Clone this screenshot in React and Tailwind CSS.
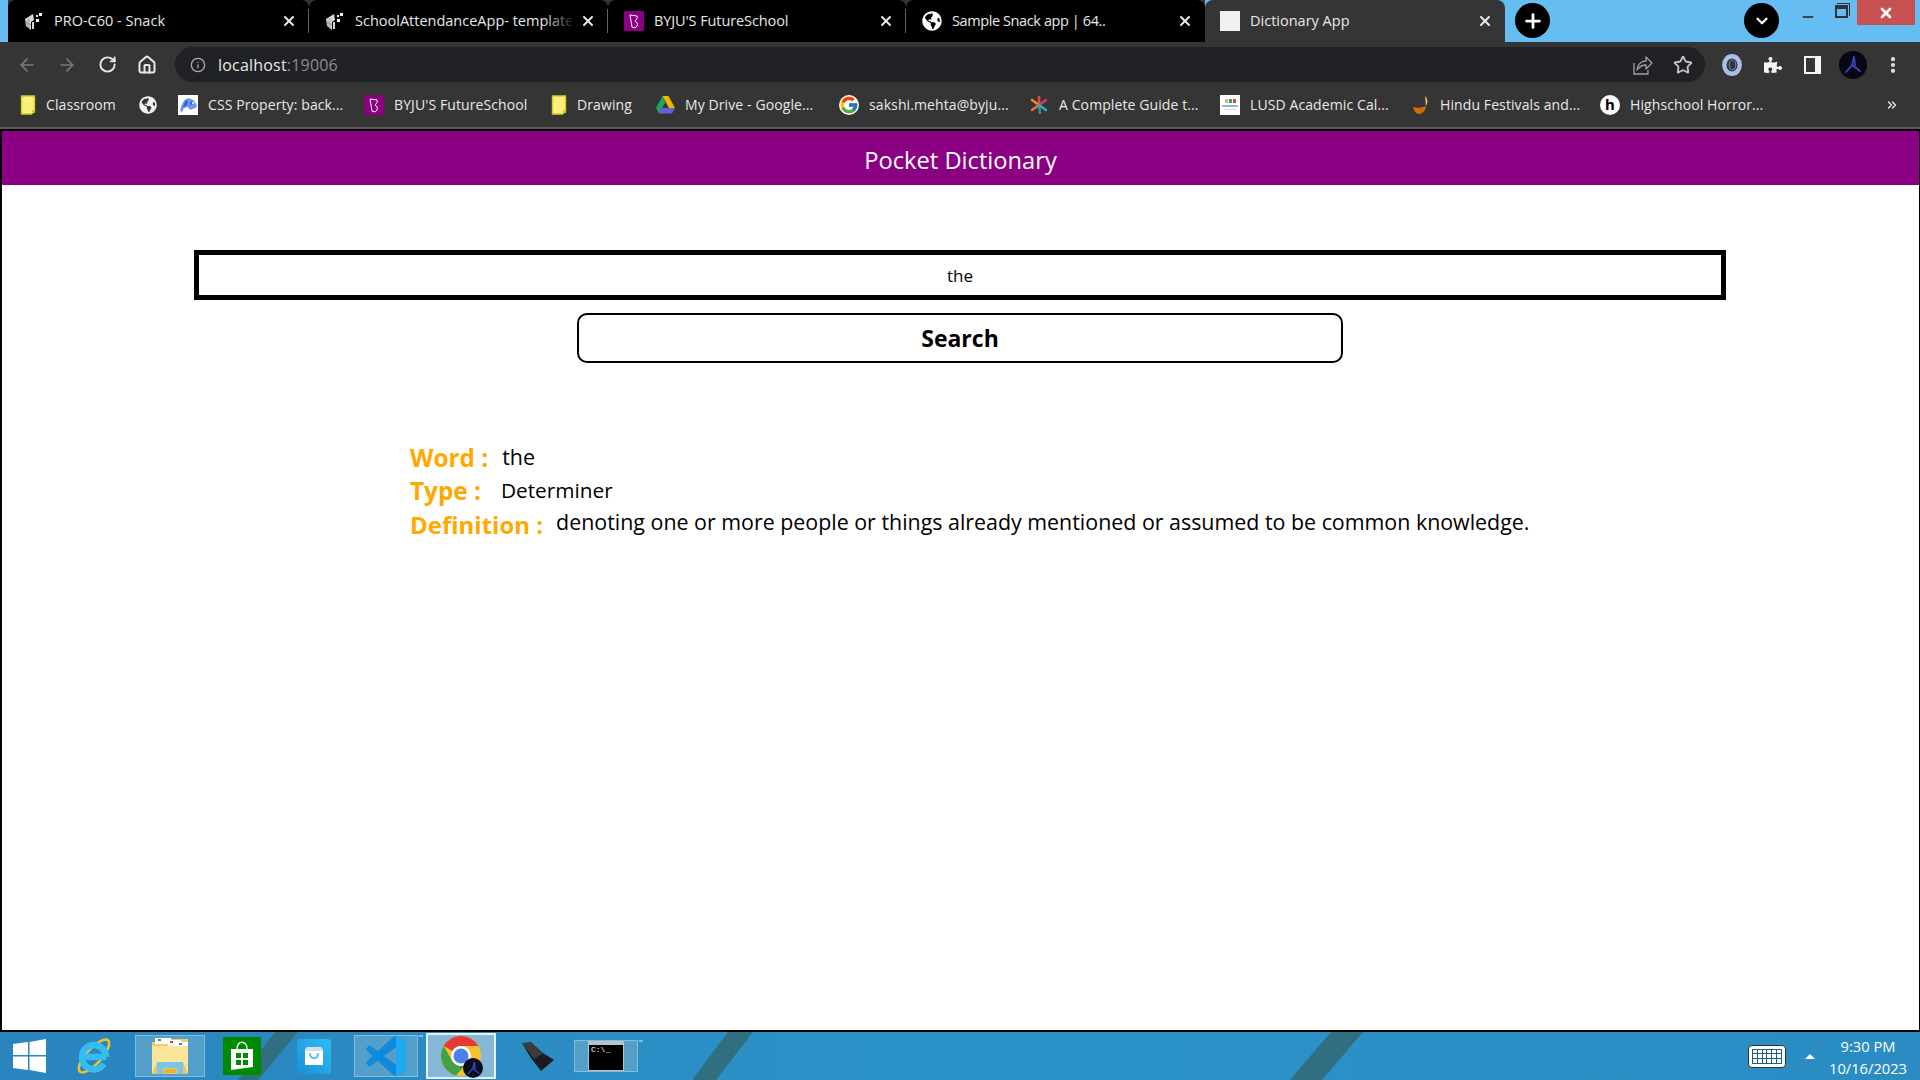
import { ArrowLeft, ArrowRight, RotateCw, Home, Info, Star, MoreVertical, Plus, ChevronDown, X, Minus, ChevronsRight } from 'lucide-react'
import { FaGlobeAmericas, FaPuzzlePiece } from 'react-icons/fa'
import { FcGoogle } from 'react-icons/fc'

const uiFont = "font-['Open_Sans','Noto_Sans',sans-serif]"

function SnackIcon() {
  return (
    <svg width="20" height="20" viewBox="0 0 20 20" className="shrink-0">
      <path d="M1 8l8-5 1 6-3 2v8l-5-4z" fill="#d8d8d8" />
      <path d="M3 9v7M5 7v10M1 11l6 3" stroke="#777" strokeWidth="0.6" />
      <rect x="8" y="11" width="2" height="7" fill="#d8d8d8" />
      <rect x="12" y="4" width="2" height="2" fill="#e8e8e8" />
      <rect x="15" y="2" width="3" height="3" fill="#f4f4f4" />
      <rect x="12" y="8" width="3" height="3" fill="#f4f4f4" />
    </svg>
  )
}

function ByjuIcon({ size = 20 }) {
  return (
    <svg width={size} height={size} viewBox="0 0 20 20" className="shrink-0">
      <rect width="20" height="20" fill="#8b0083" rx="1" />
      <path d="M6 4l7 1c1 2-1 4-2 5 2 1 3 3 2 5l-2 2-3-1z" fill="none" stroke="#fff" strokeWidth="1" />
    </svg>
  )
}

function FolderIcon() {
  return (
    <svg width="16" height="20" viewBox="0 0 16 20" className="shrink-0">
      <path d="M1.5 1h13v15l-3 3h-10z" fill="#f9f17c" stroke="#d8c92a" strokeWidth="1.4" strokeLinejoin="round" />
      <path d="M12 15h3v3h-3z" fill="#d8c92a" />
    </svg>
  )
}

function CssIcon() {
  return (
    <div className="flex h-5 w-5 shrink-0 items-center justify-center bg-white">
      <svg width="19" height="19" viewBox="0 0 19 19">
        <path d="M1 16c1-5 3-10 6-12 2-1 4-1 5 0 3 1 5 4 6 7-1 2-3 3-5 3l-2 1-2-3-4 1-2 4z" fill="#6b97ec" />
        <path d="M4 12l3-7 2 2-2 4zM12 6l2 1-1 3-2-1z" fill="#2f5fd0" />
        <circle cx="14" cy="8" r="1" fill="#fff" />
      </svg>
    </div>
  )
}

function DriveIcon() {
  return (
    <svg width="19" height="18" viewBox="0 0 19 18" className="shrink-0">
      <path d="M6.5 0h6L19 12h-6z" fill="#f4b400" />
      <path d="M6.5 0L0 12l3 5.5L9.5 6z" fill="#1fa463" />
      <path d="M6 12h13l-3 5.5H3z" fill="#6a5fd8" />
    </svg>
  )
}

function SparkIcon() {
  return (
    <svg width="20" height="20" viewBox="0 0 20 20" className="shrink-0" strokeWidth="2.6" strokeLinecap="round">
      <path d="M10 10L10 2" stroke="#d9503f" />
      <path d="M10 10L3 5" stroke="#f08a24" />
      <path d="M10 10L3 15" stroke="#ef6b4a" />
      <path d="M10 10L11 18" stroke="#2c8f9e" />
      <path d="M10 10L17 5" stroke="#d13b6d" />
      <path d="M10 10L17 15" stroke="#3aa5b5" />
    </svg>
  )
}

function LusdIcon() {
  return (
    <div className="flex h-5 w-5 shrink-0 flex-col items-center justify-center gap-[2px] bg-white">
      <div className="flex gap-[1px]">
        <div className="h-1 w-[3px] bg-[#c9b98a]" />
        <div className="h-1 w-[3px] bg-[#4a9b5e]" />
        <div className="h-1 w-[3px] bg-[#c0504d]" />
      </div>
      <div className="h-[2px] w-4 bg-[#8fb6dc]" />
      <div className="h-px w-3 bg-[#c7d9ea]" />
    </div>
  )
}

function DiyaIcon() {
  return (
    <svg width="18" height="20" viewBox="0 0 18 20" className="shrink-0">
      <path d="M1 12c4 1 9 1 13-1 0 4-3 8-7 8-3 0-5-3-6-7z" fill="#d06a00" />
      <path d="M13 1c3 3 3 7 1 10z" fill="#e9c75a" />
    </svg>
  )
}

function HIcon() {
  return (
    <div className="flex h-5 w-5 shrink-0 items-center justify-center rounded-full bg-white text-[15px] font-bold leading-none text-black">h</div>
  )
}

function ExtIcon() {
  return (
    <svg width="20" height="22" viewBox="0 0 20 22" fill="none">
      <ellipse cx="10" cy="11" rx="7.7" ry="8.8" stroke="#a9bfe9" strokeWidth="4.4" />
      <ellipse cx="10.5" cy="11" rx="3.2" ry="5" stroke="#5f7fc0" strokeWidth="1.2" />
    </svg>
  )
}

function JordanMark({ size = 20 }) {
  return (
    <svg width={size} height={size} viewBox="0 0 20 20" fill="none" stroke="#3c44cc" strokeWidth="1.8" strokeLinecap="round">
      <path d="M11 2l-2 8-6 7M9 10l8 6M11 2l1 8" />
    </svg>
  )
}

function ShareIcon() {
  return (
    <svg width="20" height="20" viewBox="0 0 20 20" fill="none" stroke="#a0a0a0" strokeWidth="1.3">
      <path d="M1 8v11h14v-4" />
      <path d="M4 15c0-5 4-9 9-9V2l6 6-6 6v-4c-4 0-7 2-9 5z" strokeLinejoin="round" />
    </svg>
  )
}

const tabs = [
  { title: 'PRO-C60 - Snack', icon: <SnackIcon />, width: 'w-[301px]', sep: true },
  { title: 'SchoolAttendanceApp- template', icon: <SnackIcon />, width: 'w-[299px]', sep: true, fade: true },
  { title: "BYJU'S FutureSchool", icon: <ByjuIcon />, width: 'w-[298px]', sep: true, text: 'tracking-[-0.1px]' },
  { title: 'Sample Snack app | 64..', icon: <FaGlobeAmericas size={20} color="#fff" className="shrink-0" />, width: 'w-[299px]', text: 'tracking-[-0.4px]' },
]

function Tab({ title, icon, width, sep, fade, text = '' }) {
  return (
    <div className={`relative flex h-[42px] items-center rounded-t-lg bg-black pl-4 pr-3 ${width}`}>
      {icon}
      <span className={`ml-[10px] flex-1 overflow-hidden whitespace-nowrap text-[14.5px] text-[#e8e8e8] ${text} ${uiFont}`}>{title}</span>
      {fade && <div className="absolute right-8 top-2 h-6 w-8 bg-gradient-to-r from-transparent to-black" />}
      <X size={16} strokeWidth={3} color="#e8e8e8" className="ml-2 shrink-0" />
      {sep && <div className="absolute right-0 top-[9px] h-6 w-px bg-[#5f6368]" />}
    </div>
  )
}

function TabStrip() {
  return (
    <div className="flex h-[42px] items-start bg-[#66bdf2] pl-2">
      <div className="flex rounded-br-lg bg-[#353535]">
        {tabs.map((t, i) => <Tab key={i} {...t} />)}
      </div>
      <div className="flex h-[42px] w-[300px] items-center rounded-t-lg bg-[#353535] pl-[15px] pr-3">
        <div className="h-5 w-5 shrink-0 bg-[#f1f1f1]" />
        <span className={`ml-[10px] flex-1 whitespace-nowrap text-[14.5px] text-[#e8e8e8] ${uiFont}`}>Dictionary App</span>
        <X size={16} strokeWidth={3} color="#e8e8e8" />
      </div>
      <div className="ml-[10px] mt-[3px] flex h-[35px] w-[35px] items-center justify-center rounded-full bg-black">
        <Plus size={22} strokeWidth={3} color="#fff" />
      </div>
      <div className="ml-[194px] mt-[3px] flex h-[35px] w-[35px] items-center justify-center rounded-full bg-black">
        <ChevronDown size={18} strokeWidth={3} color="#fff" />
      </div>
      <Minus size={16} strokeWidth={2.5} color="#222" className="ml-[21px] mt-[9px]" />
      <div className="relative ml-[19px] mt-[5px] h-[13px] w-[13px] border-2 border-t-4 border-[#333]">
        <div className="absolute -right-[4px] -top-[6px] h-[13px] w-[13px] border-r border-t border-[#333]" />
      </div>
      <div className="ml-[9px] flex h-[25px] w-[58px] items-center justify-center bg-[#c75050]">
        <X size={16} strokeWidth={4} color="#fff" />
      </div>
    </div>
  )
}

function ToolBar() {
  return (
    <div className="flex h-[40px] items-end bg-[#353535] pl-[17px]">
      <div className="flex h-[35px] items-center">
        <ArrowLeft size={20} color="#7a7a7a" />
        <ArrowRight size={20} color="#7a7a7a" className="ml-[20px]" />
        <RotateCw size={19} color="#e8e8e8" strokeWidth={2.4} className="ml-[21px]" />
        <Home size={20} color="#e8e8e8" strokeWidth={2.4} className="ml-[20px]" />
      </div>
      <div className="ml-[18px] flex h-[35px] w-[1530px] items-center rounded-full bg-[#202124] pl-[15px] pr-[12px]">
        <Info size={16} color="#a8a8a8" />
        <span className={`ml-[12px] flex-1 text-[16px] tracking-[0.2px] text-[#e8e8e8] ${uiFont}`}>localhost<span className="text-[#8c8c8c]">:19006</span></span>
        <ShareIcon />
        <Star size={20} color="#c4c4c4" strokeWidth={2.2} className="ml-[20px]" />
      </div>
      <div className="flex h-[35px] items-center">
        <div className="ml-[17px]"><ExtIcon /></div>
        <FaPuzzlePiece size={18} color="#f4f4f4" className="ml-[22px]" />
        <div className="ml-[22px] h-[18px] w-[17px] border-[2px] border-r-[6px] border-[#f4f4f4]" />
        <div className="ml-[18px] flex h-7 w-7 items-center justify-center rounded-full bg-[#070715]"><JordanMark /></div>
        <MoreVertical size={20} color="#e8e8e8" strokeWidth={3} className="ml-[16px]" />
      </div>
    </div>
  )
}

const bookmarks = [
  { label: 'Classroom', icon: <FolderIcon />, width: 'w-[72px]' },
  { label: '', icon: <FaGlobeAmericas size={18} color="#f1f1f1" className="shrink-0" />, width: '', noText: true },
  { label: 'CSS Property: back...', icon: <CssIcon />, width: 'w-[135px]' },
  { label: "BYJU'S FutureSchool", icon: <ByjuIcon />, width: 'w-[136px]' },
  { label: 'Drawing', icon: <FolderIcon />, width: 'w-[58px]' },
  { label: 'My Drive - Google...', icon: <DriveIcon />, width: 'w-[133px]' },
  { label: 'sakshi.mehta@byju...', icon: <FcGoogle size={20} className="shrink-0 rounded-full bg-white" />, width: 'w-[139px]' },
  { label: 'A Complete Guide t...', icon: <SparkIcon />, width: 'w-[140px]' },
  { label: 'LUSD Academic Cal...', icon: <LusdIcon />, width: 'w-[141px]' },
  { label: 'Hindu Festivals and...', icon: <DiyaIcon />, width: 'w-[139px]' },
  { label: 'Highschool Horror...', icon: <HIcon />, width: 'w-[134px]' },
]

function BookmarksBar() {
  return (
    <div className="flex h-[47px] items-center gap-[21px] border-b-2 border-[#5a5a5a] bg-[#353535] pl-5">
      {bookmarks.map((b, i) => (
        <div key={i} className="flex items-center gap-[10px]">
          {b.icon}
          {!b.noText && <span className={`whitespace-nowrap text-[14px] tracking-[0.1px] text-[#e8e8e8] ${b.width} ${uiFont}`}>{b.label}</span>}
        </div>
      ))}
      <ChevronsRight size={14} color="#e8e8e8" strokeWidth={2.5} className="ml-[100px]" />
    </div>
  )
}

function DictionaryPage() {
  return (
    <div className={`flex-1 border-x border-b-2 border-l-2 border-t-2 border-black bg-white ${uiFont}`}>
      <div className="flex h-[54px] items-center justify-center bg-[#8b0083] pt-[6px] text-[23.7px] text-white">Pocket Dictionary</div>
      <div className="ml-[192px] mt-[65px] flex h-[50px] w-[1532px] items-center justify-center border-[5px] border-black pt-[2px] text-[17px] text-black">the</div>
      <div className="ml-[575px] mt-[13px] flex h-[50px] w-[766px] items-center justify-center rounded-[10px] border-2 border-black text-[23px] font-bold text-black">Search</div>
      <div className="ml-[408px] mt-[79px] flex flex-col">
        <div className="flex h-[33px] items-center">
          <span className="text-[24.3px] font-bold text-[#ffa900]">Word :</span>
          <span className="ml-[14px] pb-[2px] text-[21.4px] text-black">the</span>
        </div>
        <div className="flex h-[33px] items-center">
          <span className="text-[24.3px] font-bold text-[#ffa900]">Type :</span>
          <span className="ml-[20px] pb-[2px] text-[20.8px] text-black">Determiner</span>
        </div>
        <div className="flex h-[33px] items-center">
          <span className="text-[24px] font-bold text-[#ffa900]">Definition :</span>
          <span className="ml-[13px] whitespace-nowrap pb-[4px] text-[21.4px] text-black">denoting one or more people or things already mentioned or assumed to be common knowledge.</span>
        </div>
      </div>
    </div>
  )
}

function ChromeIcon() {
  return (
    <div className="relative h-[42px] w-[42px]">
      <svg width="42" height="42" viewBox="0 0 42 42">
        <circle cx="21" cy="21" r="20" fill="#fbc02d" />
        <path d="M3.7 11A20 20 0 0 1 38.3 11H21A10 10 0 0 0 12.3 16z" fill="#e53935" />
        <path d="M3.7 11L12.3 26A10 10 0 0 0 25 30.2L16 40.4A20 20 0 0 1 3.7 11z" fill="#43a047" />
        <circle cx="21" cy="21" r="10" fill="#fff" />
        <circle cx="21" cy="21" r="7.5" fill="#4a80e8" />
      </svg>
      <div className="absolute -bottom-[1px] -right-[1px] flex h-5 w-5 items-center justify-center rounded-full bg-[#0a0f1e]">
        <JordanMark size={15} />
      </div>
    </div>
  )
}

function TaskTile({ children, active, width = 'w-[64px]', extra }) {
  return (
    <div className="flex h-full">
      <div className={`flex h-full items-center justify-center ${width} ${active ? 'border-2 border-[#e6f2f8] bg-[#85b8d6]' : 'border border-[#82bbdb] bg-[#549fca]'}`}>
        {children}
      </div>
      {extra && <div className="ml-[1px] h-full w-[4px] border border-[#82bbdb] bg-[#549fca]" />}
    </div>
  )
}

function IeIcon() {
  return (
    <svg width="40" height="40" viewBox="0 0 40 40" fill="none">
      <ellipse cx="20" cy="20" rx="21" ry="7.5" transform="rotate(-48 20 20)" stroke="#f2c22e" strokeWidth="2.6" />
      <path d="M8 21H32M8 21A12 12 0 0 1 32 21M8 21A12 12 0 0 0 30 28" stroke="#35bdf2" strokeWidth="6.5" />
    </svg>
  )
}

function ExplorerIcon() {
  return (
    <svg width="42" height="40" viewBox="0 0 42 40">
      <path d="M3 6h12l2-3h22v34H3z" fill="#f0cc6a" />
      <rect x="6" y="2" width="16" height="6" fill="#fff" />
      <rect x="19" y="4" width="13" height="6" fill="#fff" />
      <rect x="27" y="6" width="12" height="6" fill="#fff" />
      <rect x="9" y="3" width="3" height="2" fill="#3aa14a" />
      <rect x="21" y="5" width="3" height="2" fill="#d83a2e" />
      <rect x="30" y="7" width="3" height="2" fill="#3a7fd8" />
      <path d="M3 10h36v27H3z" fill="#f9e69a" />
      <path d="M8 26h26l5 12H3z" fill="#e9c662" />
      <path d="M8 26h26v12h-6v-6H14v6H8z" fill="#7cc4e8" />
      <rect x="15" y="33" width="12" height="4" fill="#e0b63e" />
    </svg>
  )
}

function Taskbar() {
  return (
    <div className="relative flex h-[48px] items-center bg-gradient-to-r from-[#2a84bd] via-[#2b93c8] to-[#2a8cc2]">
      <svg className="absolute inset-0 h-full w-full" viewBox="0 0 1920 48" preserveAspectRatio="none">
        <polygon points="275,0 298,0 258,48 238,48" fill="#2f6f80" />
        <polygon points="728,0 753,0 716,48 692,48" fill="#2f6f80" />
        <polygon points="1331,0 1363,0 1322,48 1290,48" fill="#2f6f80" />
      </svg>
      <div className="relative flex h-[46px] w-full items-center">
        <svg width="33" height="34" viewBox="0 0 33 34" className="ml-[13px]" fill="#fff">
          <path d="M0 5l15-2v13H0zM16.500 3L33 0v16H16.500zM0 17.500h15V31L0 29zM16.500 17.500H33V34l-16.500-3z" />
        </svg>
        <div className="ml-[28px]"><IeIcon /></div>
        <div className="ml-[21px]">
          <TaskTile width="w-[70px]"><ExplorerIcon /></TaskTile>
        </div>
        <div className="ml-[18px] flex h-[38px] w-[38px] items-center justify-center bg-[#008a00]">
          <svg width="26" height="30" viewBox="0 0 26 30">
            <path d="M8 8c0-9 10-9 10 0" fill="none" stroke="#fff" strokeWidth="1.4" />
            <path d="M2 8h22v18L2 29z" fill="#fff" />
            <path d="M7 12h5v5H7zM14 12h5v5h-5zM7 19h5v5H7zM14 19h5v5h-5z" fill="#008a00" />
          </svg>
        </div>
        <div className="ml-[36px] flex h-[35px] w-[34px] items-center justify-center rounded-sm bg-gradient-to-tr from-[#1b8fd6] to-[#2dbdf8]">
          <svg width="22" height="20" viewBox="0 0 22 20">
            <path d="M2 4l2-3h14l2 3v15H2z" fill="#fff" />
            <path d="M4 1h14l2 4H2z" fill="#d7dee2" />
            <path d="M7 7c0 7 8 7 8 0" fill="none" stroke="#29b6f6" strokeWidth="1.5" />
          </svg>
        </div>
        <div className="ml-[23px]">
          <TaskTile extra width="w-[64px]">
            <svg width="40" height="40" viewBox="0 0 100 100">
              <path d="M96.500 10.800L75.900.9a6.200 6.200 0 0 0-7.100 1.200L29.400 38 12.200 25a4.200 4.200 0 0 0-5.300.2L1.400 30.200a4.200 4.200 0 0 0 0 6.200L16.300 50 1.400 63.600a4.200 4.200 0 0 0 0 6.200l5.500 5a4.200 4.200 0 0 0 5.300.2l17.200-13 39.400 35.900a6.200 6.200 0 0 0 7.100 1.200l20.600-9.900a6.200 6.200 0 0 0 3.500-5.600V16.400a6.200 6.200 0 0 0-3.500-5.600zM75 72.700L45.100 50 75 27.300z" fill="#0f8adb" />
              <path d="M72 1.500L75.900.9l20.600 9.900a6.200 6.200 0 0 1 3.500 5.600v67.200a6.200 6.200 0 0 1-3.500 5.600L75.900 99 72 98.500l3-2V3.500z" fill="#1fa9f3" />
            </svg>
          </TaskTile>
        </div>
        <div className="ml-[3px]">
          <TaskTile active width="w-[70px]"><ChromeIcon /></TaskTile>
        </div>
        <svg width="33" height="30" viewBox="0 0 33 30" className="ml-[25px]">
          <path d="M1 2l9-1 12 11-9 6z" fill="#3b3b3b" />
          <path d="M13 18l9-6 11 7-13 11z" fill="#1c1c1c" />
          <path d="M1 2l12 16 7 12-10-13z" fill="#111" />
        </svg>
        <div className="ml-[20px]">
          <TaskTile extra width="w-[64px]">
            <div className="flex h-[30px] w-[36px] flex-col bg-[#b8c4cc] px-[1px] pb-[1px]">
              <div className="h-[4px]" />
              <div className="flex-1 bg-black pl-[2px] pt-[1px] font-mono text-[8px] leading-none text-white">C:\_</div>
            </div>
          </TaskTile>
        </div>
        <div className="ml-auto flex items-center">
          <div className="flex h-[23px] w-[38px] items-center justify-center rounded-sm border border-[#333] bg-white">
            <div className="grid h-[15px] w-[30px] grid-cols-6 gap-px border border-[#1d5f80] bg-[#1d5f80]">
              {Array.from({ length: 18 }).map((_, i) => <div key={i} className="bg-white" />)}
            </div>
          </div>
          <div className="ml-[19px] h-0 w-0 border-x-[5px] border-b-[5px] border-x-transparent border-b-white" />
          <div className={`ml-[15px] mr-[14px] mt-[2px] flex w-[76px] flex-col items-center whitespace-nowrap text-[14.7px] leading-[22px] text-white ${uiFont}`}>
            <span>9:30 PM</span>
            <span>10/16/2023</span>
          </div>
        </div>
      </div>
    </div>
  )
}

export default function App() {
  return (
    <div className="flex h-[1080px] w-[1920px] flex-col overflow-hidden">
      <TabStrip />
      <ToolBar />
      <BookmarksBar />
      <DictionaryPage />
      <Taskbar />
    </div>
  )
}
